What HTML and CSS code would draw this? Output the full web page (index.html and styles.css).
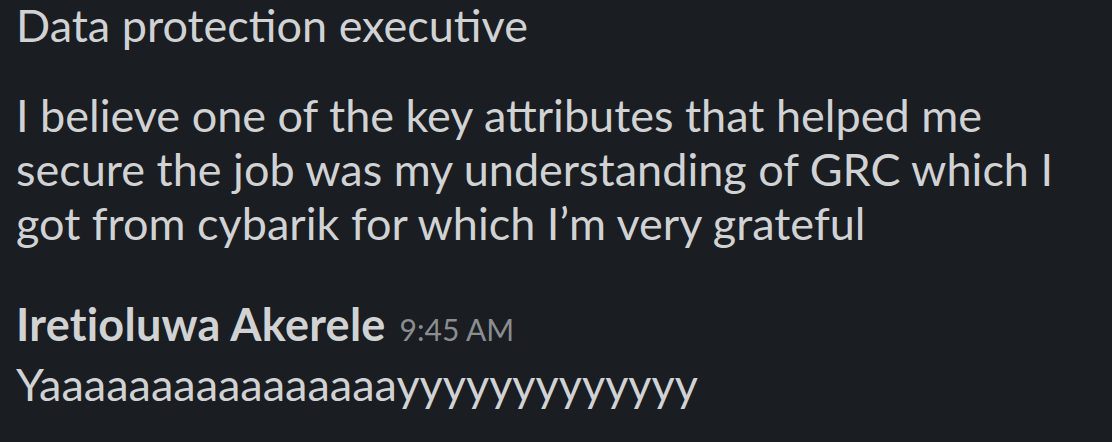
FILE: index.html
```html
<!DOCTYPE html>
<html>
<head>
<meta charset="utf-8">
<link rel="stylesheet" href="styles.css">
</head>
<body>
<div class="feed">
  <p class="line title">Data protection executive</p>
  <p class="line para">I believe one of the key attributes that helped me secure the job was my understanding of GRC which I got from cybarik for which I’m very grateful</p>
  <div class="msg">
    <div class="meta"><span class="name">Iretioluwa Akerele</span><span class="time">9:45 AM</span></div>
    <p class="line">Yaaaaaaaaaaaaaaaayyyyyyyyyyyyy</p>
  </div>
</div>
</body>
</html>
```
FILE: styles.css
```css
html, body {
  margin: 0;
  padding: 0;
  background: #1a1d21;
  height: 100%;
  overflow: hidden;
}
.feed {
  padding: 0 16px;
  margin-top: -2px;
  font-family: Lato, "Noto Sans", sans-serif;
  color: #d1d2d3;
  font-size: 45px;
  line-height: 54px;
  width: 1060px;
}
.line {
  margin: 0;
}
.para {
  margin-top: 35.5px;
}
.msg {
  margin-top: 47.7px;
}
.meta {
  display: flex;
  align-items: baseline;
  gap: 14px;
  line-height: 55px;
}
.name {
  font-weight: 700;
  letter-spacing: 0.25px;
}
.time {
  font-size: 30px;
  color: #8b8d90;
}
```
